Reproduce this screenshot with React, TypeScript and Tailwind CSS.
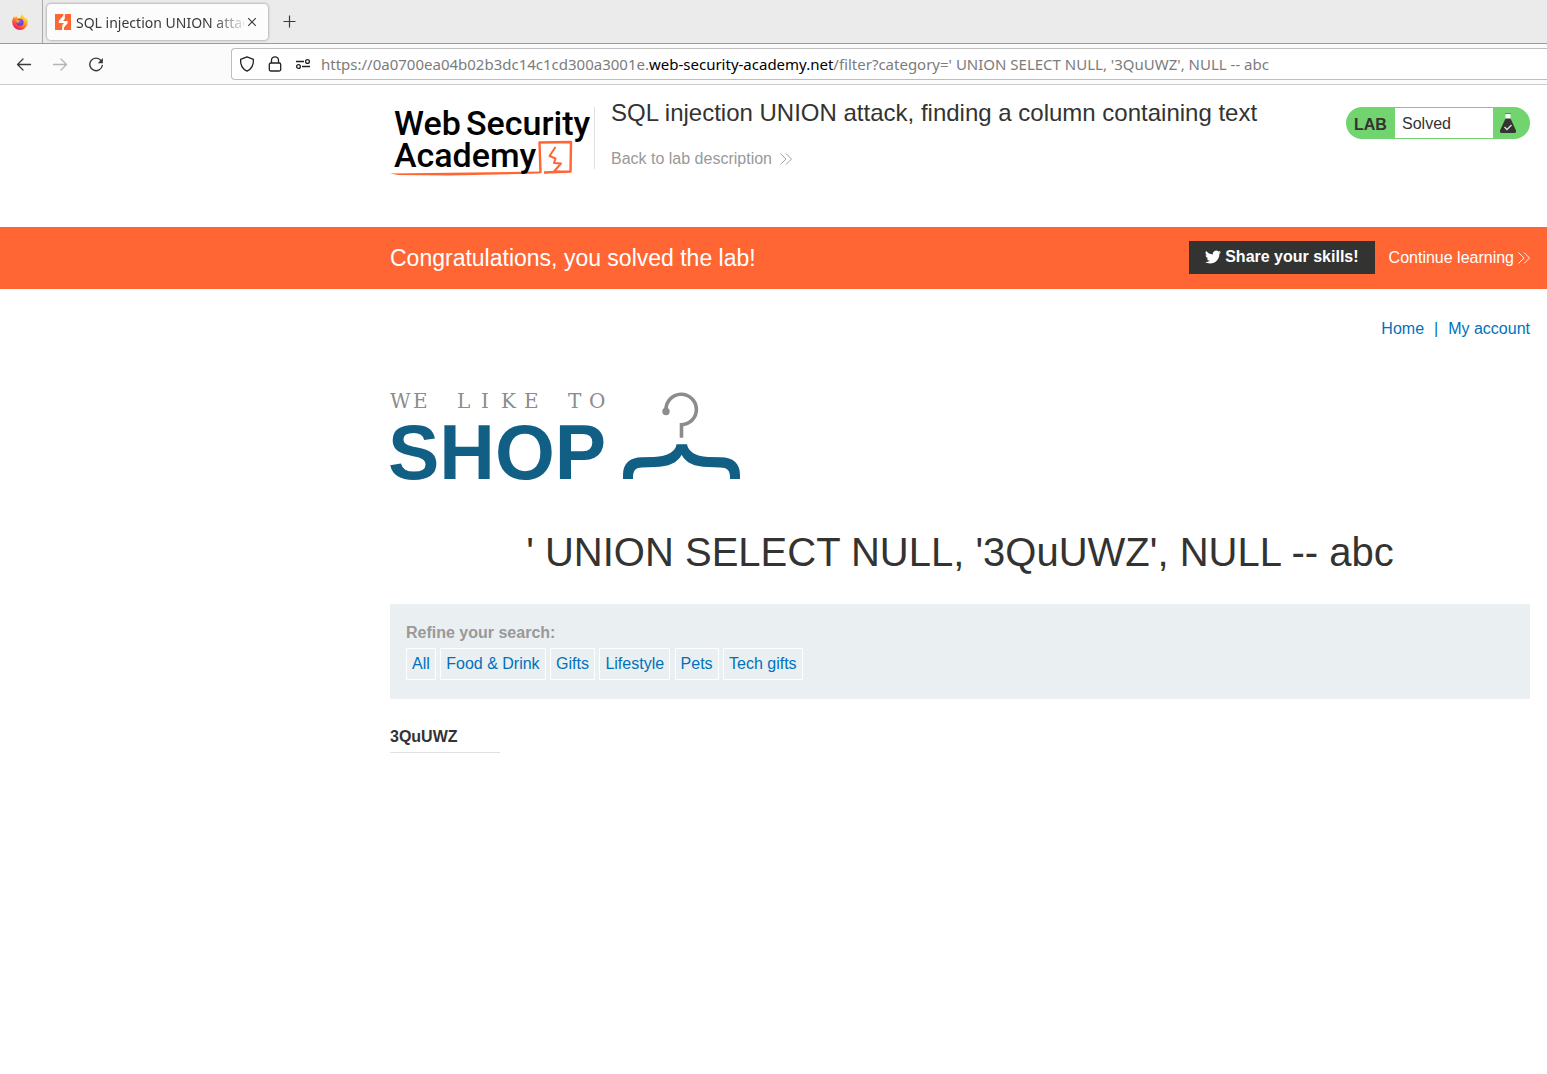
import React from "react";

const categories = ["All", "Food & Drink", "Gifts", "Lifestyle", "Pets", "Tech gifts"];

function FirefoxIcon() {
  return (
    <svg width="16" height="16" viewBox="0 0 16 16" aria-hidden="true">
      <defs>
        <linearGradient id="flame" x1="0.85" y1="0.05" x2="0.2" y2="1">
          <stop offset="0" stopColor="#fff14a" />
          <stop offset="0.4" stopColor="#ffa020" />
          <stop offset="0.7" stopColor="#ff4a3a" />
          <stop offset="1" stopColor="#e3157a" />
        </linearGradient>
        <radialGradient id="globe" cx="0.5" cy="0.3" r="0.7">
          <stop offset="0" stopColor="#9059ff" />
          <stop offset="1" stopColor="#5b3bc0" />
        </radialGradient>
      </defs>
      <path
        d="M15.2 5.6c-.4-.9-1.1-1.8-1.7-2.1.5 1 .7 1.7.8 2.3C13.400 3.700 11 2.900 10.600.300 9 1.200 8.500 3 8.400 3.800a5 5 0 0 0-2 .5C5.500 4 4.800 3.300 4.600 2.300 3.900 2.800 3.200 3.500 2.900 4c-.5-.5-.4-1.500-.4-1.700C1.100 3.500.200 6 .200 8.300a7.800 7.700 0 0 0 15.600.1c.1-1-.1-2-.6-2.800z"
        fill="url(#flame)"
      />
      <circle cx="8" cy="8.300" r="3.500" fill="url(#globe)" />
      <path d="M4 6.200c1-.6 2-.4 2.700 0 .7.100 1.600.1 1.500.6-.2.600-1.300.7-1.700 1.300-.2.500-.1.900.2 1.100-1.300.2-2.800-.9-2.700-3z" fill="#ff9a2e" />
    </svg>
  );
}

function BurpIcon() {
  return (
    <svg width="16" height="16" viewBox="0 0 16 16" className="shrink-0" aria-hidden="true">
      <rect width="16" height="16" fill="#ff6633" />
      <path d="M8.400 0H9.800V4.800L8.200 7H12.600V9.200L9 13.600V16H7.200V11.200L8.900 9H3.800V6.800L8.400 1.500z" fill="#fff" />
    </svg>
  );
}

function BrowserTabs() {
  return (
    <div className="flex h-11 items-stretch border-b border-[#9b9b9b] bg-[#ebebeb]">
      <button type="button" aria-label="Firefox View" className="flex w-[43px] items-center justify-center border-r border-[#a8a8a8] pr-0.5">
        <FirefoxIcon />
      </button>
      <div className="my-1 ml-1 flex h-9 w-[221px] items-center rounded bg-[#fcfcfc] pl-2 shadow-[0_0_3px_rgba(0,0,0,0.45)]">
        <BurpIcon />
        <span className="ml-[5px] w-[168px] overflow-hidden whitespace-nowrap text-[14px] text-[#3a3a3a] [mask-image:linear-gradient(to_right,#000_136px,transparent_172px)]">
          SQL injection UNION attack
        </span>
        <button type="button" aria-label="Close tab" className="ml-[3px]">
          <svg width="10" height="10" viewBox="0 0 10 10" stroke="#3a3a3a" strokeWidth="1.100">
            <path d="M1.200 1.200l7.600 7.600M8.800 1.200L1.200 8.800" />
          </svg>
        </button>
      </div>
      <button type="button" aria-label="New tab" className="ml-[15px] flex items-center">
        <svg width="13" height="13" viewBox="0 0 13 13" stroke="#3a3a3a" strokeWidth="1.200">
          <path d="M6.500 .500v12M.500 6.500h12" />
        </svg>
      </button>
    </div>
  );
}

function Toolbar() {
  return (
    <div className="flex h-[41px] items-center border-b border-[#cccccc] bg-[#fbfbfb] pl-4">
      <button type="button" aria-label="Back">
        <svg width="16" height="16" viewBox="0 0 16 16" fill="none" stroke="#3a3a3a" strokeWidth="1.300" strokeLinecap="round" strokeLinejoin="round">
          <path d="M14.500 8.500H1.500M7 3L1.500 8.500 7 14" />
        </svg>
      </button>
      <button type="button" aria-label="Forward" className="ml-5">
        <svg width="16" height="16" viewBox="0 0 16 16" fill="none" stroke="#b4b4b4" strokeWidth="1.300" strokeLinecap="round" strokeLinejoin="round">
          <path d="M1.500 8.500h13M9 3L14.500 8.500 9 14" />
        </svg>
      </button>
      <button type="button" aria-label="Reload" className="ml-5">
        <svg width="16" height="16" viewBox="0 0 16 16" fill="none" stroke="#3a3a3a" strokeWidth="1.400" strokeLinecap="round">
          <path d="M13 4.500A6.300 6.300 0 1 0 14.300 9.500" />
          <path d="M14.900 2V7.200H9.700z" fill="#3a3a3a" stroke="none" />
        </svg>
      </button>
      <div className="ml-[127px] flex h-8 flex-1 items-center rounded-l border border-r-0 border-[#bdbdbd] bg-white pl-[7px]">
        <svg width="16" height="16" viewBox="0 0 16 16" fill="none" stroke="#222" strokeWidth="1.300" strokeLinejoin="round" aria-hidden="true">
          <path d="M8 .8l6.400 2.500c.4 5.200-1.600 9.600-6.400 11.900C3.200 12.900 1.200 8.500 1.600 3.300z" />
        </svg>
        <svg width="16" height="16" viewBox="0 0 16 16" fill="none" stroke="#222" strokeWidth="1.300" className="ml-3" aria-hidden="true">
          <rect x="2.300" y="7" width="11.400" height="8" rx="1.500" />
          <path d="M4.500 7V4.300a3.500 3.500 0 0 1 7 0V7" />
        </svg>
        <svg width="16" height="16" viewBox="0 0 16 16" fill="none" stroke="#222" strokeWidth="1.300" className="ml-3" aria-hidden="true">
          <path d="M1 5.500h8M7 10.500h8" />
          <circle cx="12.500" cy="5.500" r="1.900" />
          <circle cx="3.500" cy="10.500" r="1.900" />
        </svg>
        <div
          role="textbox"
          aria-label="Address"
          contentEditable
          suppressContentEditableWarning
          spellCheck={false}
          className="ml-2.5 flex-1 overflow-hidden whitespace-nowrap text-[15px] text-[#7c7c7c] outline-none"
        >
          https://0a0700ea04b02b3dc14c1cd300a3001e.
          <span className="text-black">web-security-academy.net</span>
          /filter?category=' UNION SELECT NULL, '3QuUWZ', NULL -- abc
        </div>
      </div>
    </div>
  );
}

function AcademyLogo() {
  return (
    <svg width="204" height="76" viewBox="0 0 204 76" role="img" aria-label="Web Security Academy">
      <g fill="none" stroke="#ff6633" strokeWidth="2.400" strokeLinejoin="round">
        <path d="M150.500 68L149.500 37.500 181 37 180.500 66.500 154 67.500" />
        <path d="M165.500 42L159.500 51 165.500 53.500 164 58 171 58.500 164 66.500 170.500 66.500" strokeWidth="2" />
      </g>
      <path d="M0 68.500L150 66.500V68.500L60 70.500 8 70z" fill="#ff6633" />
      <g fill="#000" className="font-['Roboto'] text-[34px] font-medium">
        <text x="4" y="30">Web</text>
        <text x="76" y="30">Security</text>
        <text x="4" y="62">Academy</text>
      </g>
    </svg>
  );
}

function ShopLogo() {
  return (
    <svg width="352" height="92" viewBox="0 0 352 92" role="img" aria-label="We like to shop">
      <text x="0 23 44 67 91 111 134 155 178 199" y="17" fill="#8c8c8c" className="font-['DejaVu_Serif',serif] text-[20px]">
        WE LIKE TO
      </text>
      <text x="-2" y="88" fill="#125f85" className="text-[77px] font-bold">
        SHOP
      </text>
      <circle cx="276" cy="20.500" r="3.700" fill="#8c8c8c" />
      <path d="M276 19A15.200 15.200 0 1 1 291.500 33.700V46.700" fill="none" stroke="#8c8c8c" strokeWidth="3.600" />
      <path
        d="M233 88V84C233 72 240 66.500 252 66.300L264 66C278 65.500 286 60 286.500 53.300H297C298 60 305 65.500 318 66L331 66.300C343 66.500 350 72 350 84V88H340V86C340 79 337 76.600 330 76.400L318 76C304 75.500 296 72 291.700 63.700 287 72 279 75.500 265 76L252 76.400C246 76.600 243 79 243 86V88Z"
        fill="#125f85"
      />
    </svg>
  );
}

function DoubleChevron() {
  return (
    <svg width="12" height="12" viewBox="0 0 12 12" fill="none" stroke="currentColor" strokeWidth="0.900" aria-hidden="true">
      <path d="M.500.500L6 6 .500 11.500M6 .500L11.500 6 6 11.500" />
    </svg>
  );
}

function LabStatus() {
  return (
    <div className="mt-[22px] flex h-8 w-[184px] items-stretch overflow-hidden rounded-full bg-[#71d46e] py-px">
      <strong className="flex w-[49px] items-center pl-2 pt-1">LAB</strong>
      <span className="flex flex-1 items-center bg-white pl-[7px] pt-0.5">Solved</span>
      <span className="flex w-[37px] items-center pl-[7px]">
        <svg width="16" height="20" viewBox="0 0 16 20" aria-hidden="true">
          <path d="M5.500.500H10.500V6H5.500z" fill="#fff" />
          <path d="M5 .500H11" stroke="#777" />
          <path d="M5.500 5.500H10.500L16 17.500Q16.200 20 14.500 20H1.500Q-.200 20 0 17.500z" fill="#333332" />
          <path d="M4.500 14L7 16.500 11.500 12" stroke="#ddd" strokeWidth="1.400" fill="none" />
        </svg>
      </span>
    </div>
  );
}

export default function App() {
  return (
    <div className="min-h-screen bg-white">
      <div className="font-['Noto_Sans',sans-serif]">
        <BrowserTabs />
        <Toolbar />
      </div>
      <div className="font-['Liberation_Sans',Arial,sans-serif] text-[16px] leading-6 text-[#333332]">
        <header className="flex h-[142px] items-start pl-[390px] pr-[17px]">
          <div className="mt-5">
            <AcademyLogo />
          </div>
          <div className="mt-[22px] h-[62px] border-l border-[#e0e0e0] pl-4">
            <h2 className="-mt-2 text-[24px] leading-7">SQL injection UNION attack, finding a column containing text</h2>
            <a href="#lab" className="mt-5 flex items-center gap-2 text-[#999]">
              Back to lab description
              <DoubleChevron />
            </a>
          </div>
          <div className="ml-auto">
            <LabStatus />
          </div>
        </header>

        <section className="flex h-[62px] items-center bg-[#ff6633] pl-[390px] pr-[17px] text-white">
          <h4 className="text-[23px]">Congratulations, you solved the lab!</h4>
          <button type="button" className="mb-0.5 ml-auto flex h-[33px] items-center gap-1 bg-[#333332] px-4 font-bold">
            <svg width="16" height="16" viewBox="0 0 24 24" fill="#fff" aria-hidden="true">
              <path d="M23.950 4.570a10 10 0 0 1-2.820.770 4.960 4.960 0 0 0 2.160-2.720c-.950.550-2 .950-3.130 1.180a4.920 4.920 0 0 0-8.380 4.480C7.690 8.090 4.070 6.130 1.640 3.160a4.920 4.920 0 0 0 1.520 6.570 4.900 4.900 0 0 1-2.230-.610v.060a4.920 4.920 0 0 0 3.950 4.830 5 5 0 0 1-2.210.080 4.940 4.940 0 0 0 4.600 3.420A9.870 9.870 0 0 1 0 19.540a13.990 13.990 0 0 0 7.550 2.210c9.050 0 14-7.500 14-13.980 0-.210 0-.420-.020-.630a9.940 9.940 0 0 0 2.420-2.570z" />
            </svg>
            Share your skills!
          </button>
          <a href="#next" className="ml-3.5 flex items-center gap-1">
            Continue learning
            <DoubleChevron />
          </a>
        </section>

        <main className="pl-[390px] pr-[17px]">
          <nav className="flex justify-end gap-2.5 pt-7 text-[#0071bc]">
            <a href="#home">Home</a>
            <span>|</span>
            <a href="#account">My account</a>
          </nav>
          <div className="mt-[50px]">
            <ShopLogo />
          </div>
          <h1 className="mt-[45px] text-center text-[40px] leading-[48px]">' UNION SELECT NULL, '3QuUWZ', NULL -- abc</h1>
          <section className="mt-7 h-[95px] bg-[#eaeff2] px-4 pt-[17px]">
            <label className="block font-bold text-[#999]">Refine your search:</label>
            <div className="mt-[3px]">
              {categories.map((name) => (
                <React.Fragment key={name}>
                  <a href="#filter" className="inline-block border border-white px-[5px] py-[3px] text-[#0071bc]">
                    {name}
                  </a>{" "}
                </React.Fragment>
              ))}
            </div>
          </section>
          <table className="mt-[22px] w-[110px] text-left">
            <tbody>
              <tr>
                <th className="border-b border-[#e0e0e0] pb-[3px] pt-1">3QuUWZ</th>
              </tr>
            </tbody>
          </table>
        </main>
      </div>
    </div>
  );
}
